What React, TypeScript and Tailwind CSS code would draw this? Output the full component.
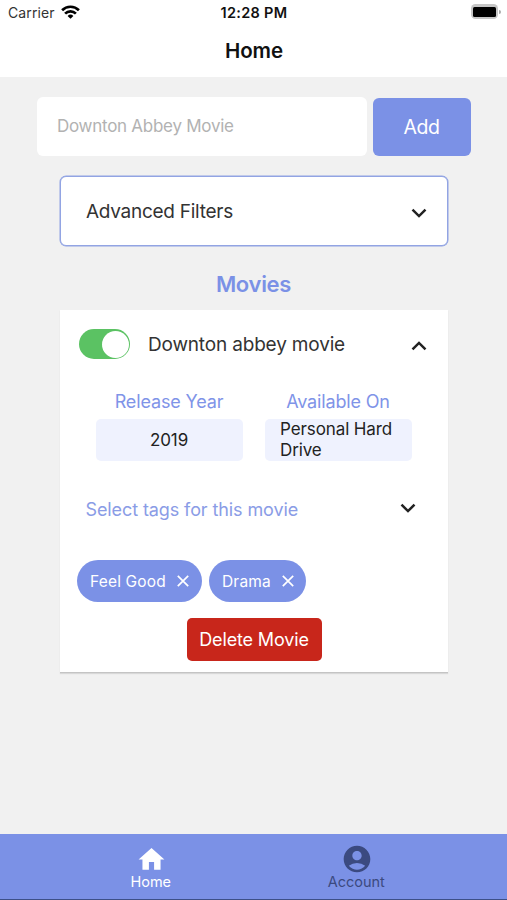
import React from "react";
import { MdHome, MdAccountCircle } from "react-icons/md";

function StatusBar() {
  return (
    <div className="flex h-[25px] items-center justify-between pl-2 pr-[6px] text-[#111]">
      <div className="flex w-[99px] items-center gap-[6px]">
        <span className="text-[14px] leading-5 tracking-[0.1px] text-[#333]">Carrier</span>
        <svg width="19" height="14" viewBox="0 0 19 14" fill="none" stroke="#000" strokeWidth="2.7" className="-mt-[2px]">
          <path d="M1.1 5.2a12 12 0 0 1 16.8 0" />
          <path d="M4.1 8.6a7.7 7.7 0 0 1 10.8 0" />
          <path d="M9.5 13.8 6.6 11a4.2 4.2 0 0 1 5.8 0z" fill="#000" stroke="none" />
        </svg>
      </div>
      <span className="text-[14.5px] font-semibold leading-5 tracking-[0.3px]">12:28 PM</span>
      <div className="-mt-[2px] flex w-[100px] items-center justify-end">
        <div className="h-[15px] w-[27.5px] rounded-[4.5px] bg-[#c6c6c6] p-[2.5px]">
          <div className="h-full w-full rounded-[1.5px] bg-black" />
        </div>
        <div className="ml-px h-1 w-[1.5px] rounded-r bg-[#aaa]" />
      </div>
    </div>
  );
}

function Chevron({ up = false }: { up?: boolean }) {
  return (
    <svg width="16" height="10" viewBox="0 0 16 10" fill="none" stroke="#222" strokeWidth="2.5" className="shrink-0">
      <path d={up ? "M1.5 8.3 8 1.9l6.5 6.4" : "M1.5 1.7 8 8.1l6.5-6.4"} />
    </svg>
  );
}

function Field({ label, children }: { label: string; children: React.ReactNode }) {
  return (
    <div className="flex w-[147px] flex-col items-center">
      <span className="-ml-px h-[29px] whitespace-nowrap text-[18px] leading-[23px] tracking-[-0.15px] text-[#7f94e8]">{label}</span>
      <div className="flex h-[42px] w-full items-center rounded-[5px] bg-[#eff2fe] px-[15px] text-[17px] leading-[21px] tracking-[-0.1px] text-[#222]">
        {children}
      </div>
    </div>
  );
}

function Tag({ name }: { name: string }) {
  return (
    <div className="flex h-[41.5px] items-center gap-[11px] rounded-full bg-[#7b91e6] pl-[13px] pr-[12.5px] text-white">
      <span className="pt-[2px] text-[15.5px] leading-5 tracking-[0.18px]">{name}</span>
      <svg width="12" height="12" viewBox="0 0 12 12" stroke="currentColor" strokeWidth="1.7">
        <path d="M.8.8l10.4 10.4M11.2.8.8 11.2" />
      </svg>
    </div>
  );
}

export default function App() {
  return (
    <div className="flex h-[900px] w-[507px] flex-col overflow-hidden bg-[#f1f1f1] font-['Inter','Liberation_Sans',sans-serif]">
      <header className="h-[77px] bg-white">
        <StatusBar />
        <h1 className="mt-[14px] pl-px text-center text-[20.5px] font-semibold leading-6 tracking-[-0.1px] text-[#111]">Home</h1>
      </header>

      <main className="flex flex-1 flex-col px-[60px] pt-5">
        <div className="-ml-[23px] -mr-[24px] flex items-center gap-[6px]">
          <div className="flex h-[59px] w-[330px] items-center rounded-[6px] bg-white pl-[20px] text-[17px] tracking-[-0.27px] text-[#b2b2b2]">
            Downton Abbey Movie
          </div>
          <button className="h-[58px] w-[98px] rounded-[6px] bg-[#7b91e6] pr-[9px] pl-[8px] pt-[3px] text-[19.5px] tracking-[-0.5px] text-white">Add</button>
        </div>

        <div className="mt-5 flex h-[70px] w-[388px] items-center justify-between rounded-[6px] border-[1.5px] border-[#92a4e3] bg-white pl-[25px] pr-[20px] pt-[2px] text-[19px] text-[#333] ring-[0.5px] ring-[#92a4e3]">
          <span className="tracking-[-0.27px]">Advanced Filters</span>
          <span className="mt-px"><Chevron /></span>
        </div>

        <h2 className="mt-[24px] text-center text-[22px] font-semibold leading-7 tracking-[-0.3px] text-[#7b91e6]">Movies</h2>

        <section className="mt-[12px] h-[363px] w-[388px] border-b border-[#c4c4c4] bg-white shadow-[0_1px_1px_#d8d8d8]">
          <div className="flex h-[70px] items-center pl-[19px] pr-[21px]">
            <div className="-mt-[2px] flex h-[30px] w-[51px] items-center justify-end rounded-full bg-[#5bc263] p-[1.5px]">
              <div className="h-[27px] w-[27px] rounded-full bg-white" />
            </div>
            <span className="ml-[18px] flex-1 text-[19px] tracking-[-0.17px] text-[#333]">Downton abbey movie</span>
            <span className="mt-[2px]"><Chevron up /></span>
          </div>

          <div className="flex gap-[22px] pl-[36px] pt-[10px]">
            <Field label="Release Year">
              <span className="w-full pr-px text-center">2019</span>
            </Field>
            <Field label="Available On">
              <span>Personal Hard<br />Drive</span>
            </Field>
          </div>

          <div className="mt-[34px] flex h-[28px] items-center justify-between pl-[25.5px] pr-[32.5px]">
            <span className="text-[18px] tracking-[-0.1px] text-[#8a9ce6]">Select tags for this movie</span>
            <span className="-mt-[2px]"><Chevron /></span>
          </div>

          <div className="mt-[37px] flex gap-[7.5px] pl-[17px]">
            <Tag name="Feel Good" />
            <Tag name="Drama" />
          </div>

          <button className="mx-auto mt-[16px] block h-[43px] w-[135px] rounded-[5px] bg-[#c8261b] text-[18px] tracking-[-0.15px] text-white">
            Delete Movie
          </button>
        </section>
      </main>

      <nav className="flex h-[66px] border-b border-[#3d5088] bg-[#7b91e6] px-[48px]">
        <div className="flex w-[206px] flex-col items-center pt-[10px] text-white">
          <MdHome size={31} className="ml-[2px]" />
          <span className="text-[14.5px] leading-[14px]">Home</span>
        </div>
        <div className="flex w-[206px] flex-col items-center pt-[9px] text-[#3b4a80]">
          <MdAccountCircle size={32} className="ml-[2px]" />
          <span className="text-[14.5px] leading-[14px]">Account</span>
        </div>
      </nav>
    </div>
  );
}
